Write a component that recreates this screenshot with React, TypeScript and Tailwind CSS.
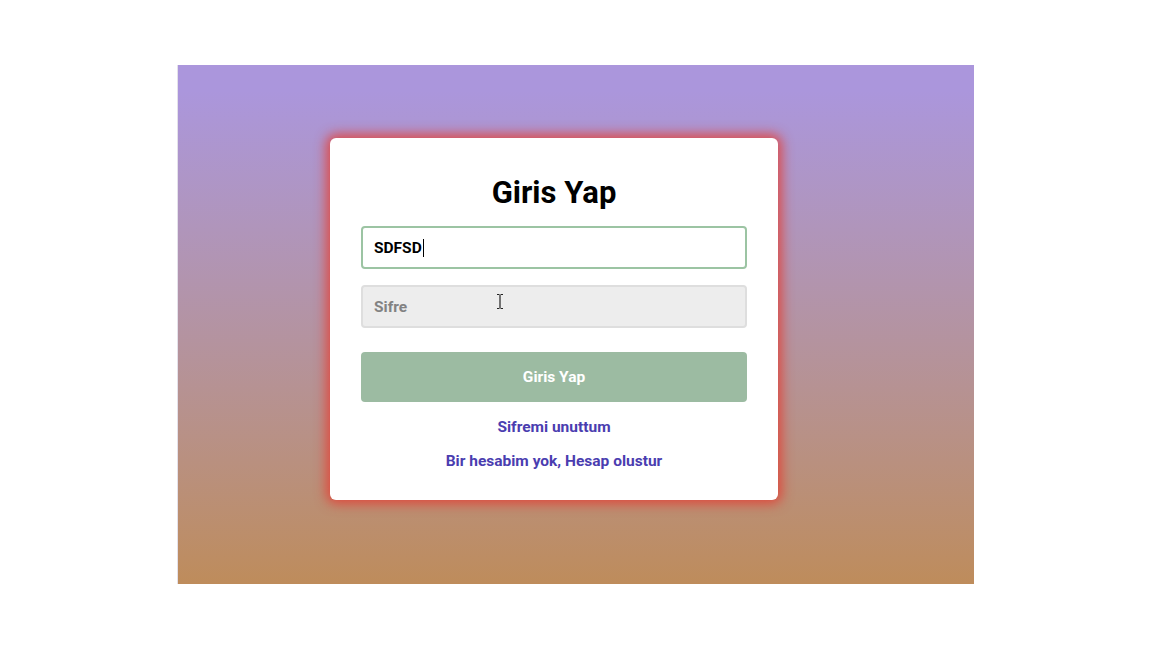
// Login screen - gradient frame with glowing card

function Caret() {
  return <span className="inline-block w-px h-[18px] bg-black align-middle ml-px -mt-0.5" />;
}

function IBeam() {
  return (
    <svg className="absolute left-[494px] top-[293px] pointer-events-none" width="12" height="17" viewBox="0 0 12 17">
      <path d="M3 1.5h2.5M6.5 1.5H9M6 2v13M3 15.5h2.5M6.5 15.5H9" stroke="#222" strokeWidth="1.2" fill="none" />
    </svg>
  );
}

export default function App() {
  return (
    <div
      className="w-[1152px] h-[648px] bg-white flex items-center pl-[177px] relative"
      style={{ fontFamily: 'Roboto, "Liberation Sans", sans-serif' }}
    >
      <div className="w-[797px] h-[519px] border-l border-[#e4e1ea] bg-gradient-to-b from-[#ab96dc] from-5% to-[#be8c5b] pl-[152px] pt-[73px]">
        <div className="w-[448px] bg-white rounded-md shadow-[0_0_12px_4px_rgba(228,62,52,0.85)] px-[31px] pt-[36px] pb-[27px] flex flex-col items-stretch">
          <h1 className="text-[31px] font-bold text-black text-center leading-[38px]">Giris Yap</h1>

          <div className="mt-[14px] h-[43px] rounded border-2 border-[#9cc4a3] bg-white flex items-center px-[11px] pt-[3px] text-[15.5px] font-bold text-black">
            SDFSD<Caret />
          </div>

          <div className="mt-[16px] h-[43px] rounded border-2 border-[#dedede] bg-[#ededed] flex items-center px-[11px] pt-[4px] text-[15.5px] font-bold text-[#828282]">
            Sifre
          </div>

          <button className="mt-[24px] h-[50px] rounded bg-[#9cbba2] text-white font-bold text-[15.5px] pt-0.5">
            Giris Yap
          </button>

          <a className="mt-[13px] text-center text-[15.5px] font-bold leading-6 text-[#4a3db0] cursor-pointer">
            Sifremi unuttum
          </a>
          <a className="mt-[10px] text-center text-[15.5px] font-bold leading-6 text-[#4a3db0] cursor-pointer">
            Bir hesabim yok, Hesap olustur
          </a>
        </div>
      </div>
      <IBeam />
    </div>
  );
}
